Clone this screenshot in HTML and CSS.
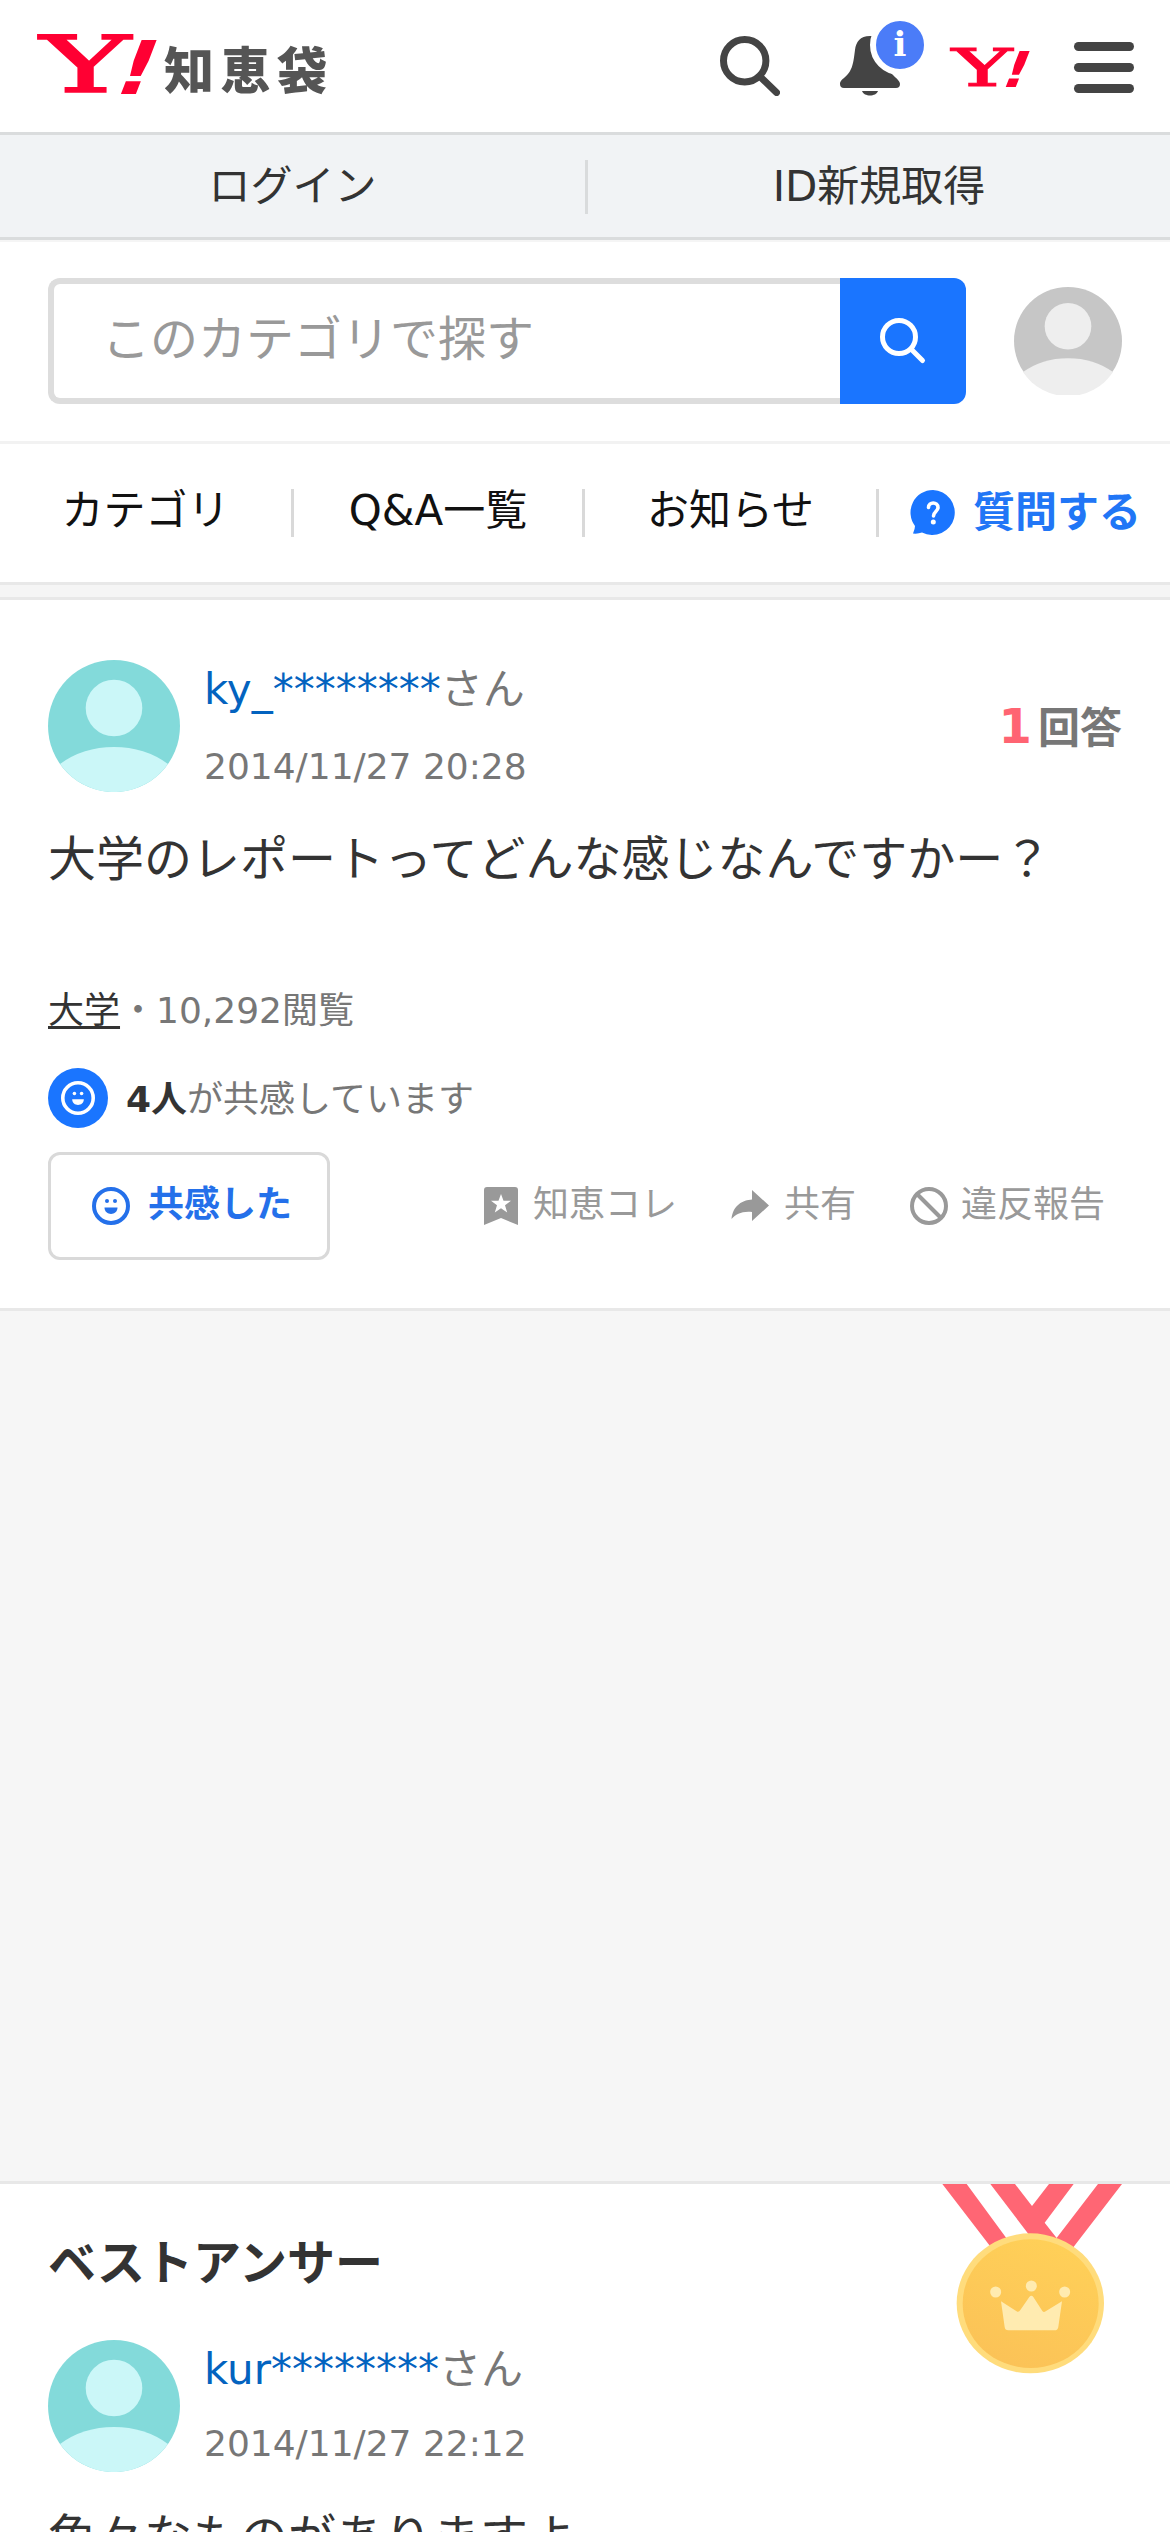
FILE: index.html
```html
<!DOCTYPE html>
<html lang="ja">
<head>
<meta charset="utf-8">
<title>Yahoo!知恵袋</title>
<link rel="stylesheet" href="styles.css">
</head>
<body>
<header class="masthead">
  <a class="brand">
    <svg class="brand-mark" viewBox="0 0 118 64" width="118" height="64">
      <text class="mark-y" transform="translate(1 59) scale(1.74 1)" x="0" y="0" font-size="79">Y</text>
      <text class="mark-bang" transform="translate(70 61) skewX(-21) scale(1.15 1)" x="0" y="0" font-size="74">!</text>
    </svg>
    <span class="brand-name">知恵袋</span>
  </a>
  <nav class="tools">
    <svg width="60" height="60" viewBox="0 0 60 60" fill="none" stroke="#444" stroke-linecap="round"><circle cx="24.7" cy="24.8" r="21.2" stroke-width="7"/><path d="M42 42.5L56.5 56.5" stroke-width="7"/></svg>
    <span class="bell">
      <svg width="60" height="60" viewBox="0 0 60 60" fill="#444"><path d="M30 0C20 0 16 6 15 14C13 30 12 35 4 42C0 45 0 47 0 48Q0 52 4 52H56Q60 52 60 48C60 45 57 43 53 39C46 33 46 26 45 14C44 6 40 0 30 0Z"/><path d="M22 55H38C36 61 24 61 22 55Z"/></svg>
      <span class="badge">i</span>
    </span>
    <svg class="mini-mark" viewBox="0 0 118 64" width="79" height="43">
      <text class="mark-y" transform="translate(1 59) scale(1.74 1)" x="0" y="0" font-size="79">Y</text>
      <text class="mark-bang" transform="translate(70 61) skewX(-21) scale(1.15 1)" x="0" y="0" font-size="74">!</text>
    </svg>
    <span class="menu"><i></i><i></i><i></i></span>
  </nav>
</header>
<div class="account">
  <a>ログイン</a>
  <a>ID新規取得</a>
</div>
<div class="search">
  <div class="search-box">
    <span class="search-field">このカテゴリで探す</span>
    <span class="search-button"><svg width="48" height="48" viewBox="0 0 48 48" fill="none" stroke="#fff" stroke-width="5" stroke-linecap="round"><circle cx="20" cy="20" r="16.5"/><path d="M33 33L43.5 43.5"/></svg></span>
  </div>
  <svg class="avatar-small" viewBox="0 0 132 132"><circle cx="66" cy="66" r="66" fill="#c6c6c6"/><circle cx="66" cy="48" r="28.5" fill="#eee"/><path d="M11 104Q34 87 66 87T121 104A66 66 0 0 1 11 104Z" fill="#eee"/></svg>
</div>
<nav class="tabs">
  <a class="tab"><span>カテゴリ</span></a>
  <a class="tab"><span>Q&amp;A一覧</span></a>
  <a class="tab notices"><span>お知らせ</span></a>
  <a class="tab ask">
    <svg width="46" height="46" viewBox="0 0 46 46"><path d="M23 0A22.5 22.5 0 1 1 12 42.5Q8 44 3 43.500Q5 39 5 36A22.500 22.500 0 0 1 23 0Z" fill="#1a75ff"/><path d="M18.500 17.500C18.500 11.500 28 11.500 28 17.500C28 21.500 23.500 21.500 23.500 26" fill="none" stroke="#fff" stroke-width="3.600" stroke-linecap="round"/><circle cx="23.300" cy="32" r="2.500" fill="#fff"/></svg>
    <span>質問する</span>
  </a>
</nav>
<div class="strip"></div>
<main>
  <article class="card">
    <div class="author">
      <svg class="avatar" viewBox="0 0 132 132"><circle cx="66" cy="66" r="66" fill="#83dada"/><circle cx="66" cy="48" r="28.300" fill="#cbf7f8"/><path d="M12 104Q35 87 66 87T120 104A66 66 0 0 1 12 104Z" fill="#cbf7f8"/></svg>
      <div class="who">
        <p class="name"><a>ky_********</a>さん</p>
        <p class="date">2014/11/27 20:28</p>
      </div>
      <p class="count"><b>1</b>回答</p>
    </div>
    <h1 class="question">大学のレポートってどんな感じなんですかー？</h1>
    <p class="meta"><a>大学</a>・10,292閲覧</p>
    <div class="empathy">
      <span class="empathy-icon"><svg width="34" height="34" viewBox="0 0 38 38" fill="#fff"><circle cx="19" cy="19" r="17" fill="none" stroke="#fff" stroke-width="4"/><circle cx="15" cy="14" r="2"/><circle cx="23" cy="14" r="2"/><path d="M12.500 20.500H25.500C25.500 29 12.500 29 12.500 20.500Z"/></svg></span>
      <p><b>4人</b>が共感しています</p>
    </div>
    <div class="actions">
      <a class="empathize"><svg width="38" height="38" viewBox="0 0 38 38" fill="#2470ea"><circle cx="19" cy="19" r="17" fill="none" stroke="#2470ea" stroke-width="4"/><circle cx="15" cy="14" r="2"/><circle cx="23" cy="14" r="2"/><path d="M12.500 20.500H25.500C25.500 29 12.500 29 12.500 20.500Z"/></svg><span>共感した</span></a>
      <a class="action"><svg width="34" height="38" viewBox="0 0 34 38"><path fill-rule="evenodd" d="M3 0H31Q34 0 34 3V38L17 31L0 38V3Q0 0 3 0ZM17 7L14.500 13.800H7L13 18.300L10.800 25.500L17 21.200L23.200 25.500L21 18.300L27 13.800H19.500Z" fill="#999"/></svg><span>知恵コレ</span></a>
      <a class="action"><svg width="38" height="32" viewBox="0 0 38 32"><path d="M21 0L38 15.500L21 31V22C11 21 5 24 0.500 29C2 15 12 10 21 9.500Z" fill="#999"/></svg><span>共有</span></a>
      <a class="action report"><svg width="38" height="38" viewBox="0 0 38 38" fill="none" stroke="#999" stroke-width="4"><circle cx="19" cy="19" r="17"/><path d="M7 7L31 31"/></svg><span>違反報告</span></a>
    </div>
  </article>
  <div class="ad-slot"></div>
  <article class="card answer">
    <svg class="medal" width="180" height="192" viewBox="126 72 540 576">
      <defs><linearGradient id="gold" x1=".7" y1="0" x2=".3" y2="1"><stop offset="0" stop-color="#ffd058"/><stop offset="1" stop-color="#fbc257"/></linearGradient></defs>
      <path d="M127 72H200L326 244L270 258ZM271 72H345L396 138L447 72H521L434 188L470 234L396 236ZM594 72H666L520 262L468 236Z" fill="#ff6674"/>
      <ellipse cx="391" cy="430" rx="221" ry="210" fill="#ffdc7c"/>
      <ellipse cx="392" cy="431" rx="204" ry="193" fill="url(#gold)"/>
      <g fill="#ffebb0"><circle cx="287" cy="396" r="16.500"/><circle cx="394" cy="378" r="16.500"/><circle cx="494" cy="396" r="16.500"/><path d="M303 424L352 455Q357 457 361 450L388 411Q394 403 400 411L427 453Q431 458 437 454L486 424L475 500Q474 511 463 511H325Q315 511 314 501Z"/></g>
    </svg>
    <h2>ベストアンサー</h2>
    <div class="author">
      <svg class="avatar" viewBox="0 0 132 132"><circle cx="66" cy="66" r="66" fill="#83dada"/><circle cx="66" cy="48" r="28.300" fill="#cbf7f8"/><path d="M12 104Q35 87 66 87T120 104A66 66 0 0 1 12 104Z" fill="#cbf7f8"/></svg>
      <div class="who">
        <p class="name"><a>kur********</a>さん</p>
        <p class="date">2014/11/27 22:12</p>
      </div>
    </div>
    <p class="answer-text">色々なものがありますよ</p>
  </article>
</main>
</body>
</html>
```
FILE: styles.css
```css
* { box-sizing: border-box; margin: 0; padding: 0; }
html { height: 2532px; overflow: hidden; }
body {
  height: 2532px;
  overflow: hidden;
  background: #fff;
  color: #333;
  font: 36px/54px "DejaVu Sans", "Noto Sans CJK JP", sans-serif;
}
svg { display: block; flex: none; }

.masthead {
  height: 135px;
  display: flex;
  justify-content: space-between;
  border-bottom: 3px solid #dadcdd;
  padding: 0 36px 0 39px;
}
.brand { display: flex; align-items: flex-start; gap: 7px; padding-top: 33px; }
.brand-mark, .mini-mark { overflow: visible; }
.mark-y {
  font-family: "DejaVu Serif", serif;
  fill: #ff0033;
  stroke: #ff0033;
  stroke-width: 1.6px;
}
.mark-bang { font-family: "DejaVu Sans", sans-serif; font-weight: 700; fill: #ff0033; }
.brand-name {
  color: #555;
  font: 900 50px/68px "Noto Sans CJK JP", sans-serif;
  letter-spacing: 6.5px;
}
.tools { display: flex; align-items: flex-start; padding-top: 36px; }
.bell { position: relative; margin-left: 60px; }
.badge {
  position: absolute;
  left: 30px;
  top: -21px;
  width: 60px;
  height: 60px;
  border: 6px solid #fff;
  border-radius: 50%;
  background: #4b7cf8;
  color: #fff;
  font: 700 34px/46px "DejaVu Serif", serif;
  text-align: center;
}
.mini-mark { margin: 10px 0 0 51px; }
.menu { display: flex; flex-direction: column; gap: 12px; margin: 6px 0 0 44px; }
.menu i { width: 60px; height: 9px; border-radius: 5px; background: #444; }

.account {
  height: 105px;
  display: flex;
  background: #f1f3f5;
  border-bottom: 3px solid #dadcdd;
  box-shadow: 0 2px 0 #f5f5f5;
}
.account a {
  flex: 1;
  display: flex;
  align-items: center;
  justify-content: center;
  padding-top: 2px;
  font-size: 42px;
  color: #333;
}
.account a + a::before {
  content: "";
  width: 3px;
  height: 54px;
  margin-right: auto;
  background: #d9dbdc;
}
.account a + a::after { content: ""; margin-left: auto; }

.search {
  height: 204px;
  display: flex;
  align-items: center;
  justify-content: space-between;
  padding: 0 48px;
  border-bottom: 3px solid #f2f2f2;
}
.search-box { display: flex; width: 918px; height: 126px; }
.search-field {
  flex: 1;
  border: 6px solid #ddd;
  border-right: 0;
  border-radius: 12px 0 0 12px;
  padding-left: 48px;
  color: #999;
  font-size: 48px;
  line-height: 111px;
}
.search-button {
  width: 126px;
  display: grid;
  place-items: center;
  background: #1a75ff;
  border-radius: 0 12px 12px 0;
}
.avatar-small { width: 108px; height: 108px; }

.tabs { height: 138px; display: flex; align-items: center; }
.tab {
  width: 291px;
  height: 48px;
  display: flex;
  align-items: center;
  justify-content: center;
  font-size: 42px;
  color: #111;
}
.tab + .tab { border-left: 3px solid #d9d9d9; }
.tab span { margin-top: -5px; }
.tab.notices { width: 294px; }
.tab.ask {
  color: #2176f6;
  font-weight: 700;
  gap: 17px;
  justify-content: flex-start;
  padding-left: 31px;
}
.tab.ask span { margin-top: 0; }
.strip {
  height: 18px;
  background: #f5f5f5;
  border: solid #e8e8e8;
  border-width: 3px 0;
}

.card { padding: 60px 48px 48px; }
.author { display: flex; height: 132px; }
.avatar { width: 132px; height: 132px; margin-right: 24px; }
.name { font-size: 42px; line-height: 60px; color: #777; }
.name a { color: #0363bf; }
.date { margin-top: 20px; color: #777; }
.count {
  margin-left: auto;
  align-self: center;
  display: flex;
  align-items: baseline;
  gap: 6px;
  padding-top: 3px;
  font-size: 42px;
  font-weight: 700;
  color: #777;
}
.count b { font-size: 48px; color: #ff6472; }
.question { margin-top: 31px; font-size: 48px; line-height: 72px; font-weight: 400; }
.meta { margin-top: 89px; color: #777; }
.meta a {
  color: #333;
  text-decoration: underline 3px;
  text-underline-offset: 3px;
  text-decoration-skip-ink: none;
}
.empathy { display: flex; height: 60px; align-items: center; gap: 18px; margin-top: 30px; color: #777; }
.empathy p { padding-top: 4px; }
.empathy b { color: #333; }
.empathy-icon {
  width: 60px;
  height: 60px;
  display: grid;
  place-items: center;
  border-radius: 50%;
  background: #1a75ff;
}
.actions { display: flex; align-items: center; height: 108px; margin-top: 24px; color: #999; }
.empathize {
  display: flex;
  align-items: center;
  width: 282px;
  height: 108px;
  border: 3px solid #d9d9d9;
  border-radius: 12px;
  padding-left: 41px;
  gap: 18px;
  color: #2470ea;
  font-weight: 700;
  margin-right: 154px;
}
.actions span { margin-top: -2px; }
.action { display: flex; align-items: center; gap: 15px; }
.action + .action { margin-left: 54px; }
.action.report { gap: 13px; }
.ad-slot {
  height: 876px;
  background: #f6f6f6;
  border: solid #e8e8e8;
  border-width: 3px 0;
}
.answer { position: relative; padding-top: 43px; }
.answer h2 { font-size: 48px; line-height: 72px; margin-bottom: 41px; }
.answer .date { margin-top: 17px; }
.answer-text { margin-top: 29px; font-size: 48px; line-height: 72px; }
.medal { position: absolute; right: 48px; top: 0; }
```
